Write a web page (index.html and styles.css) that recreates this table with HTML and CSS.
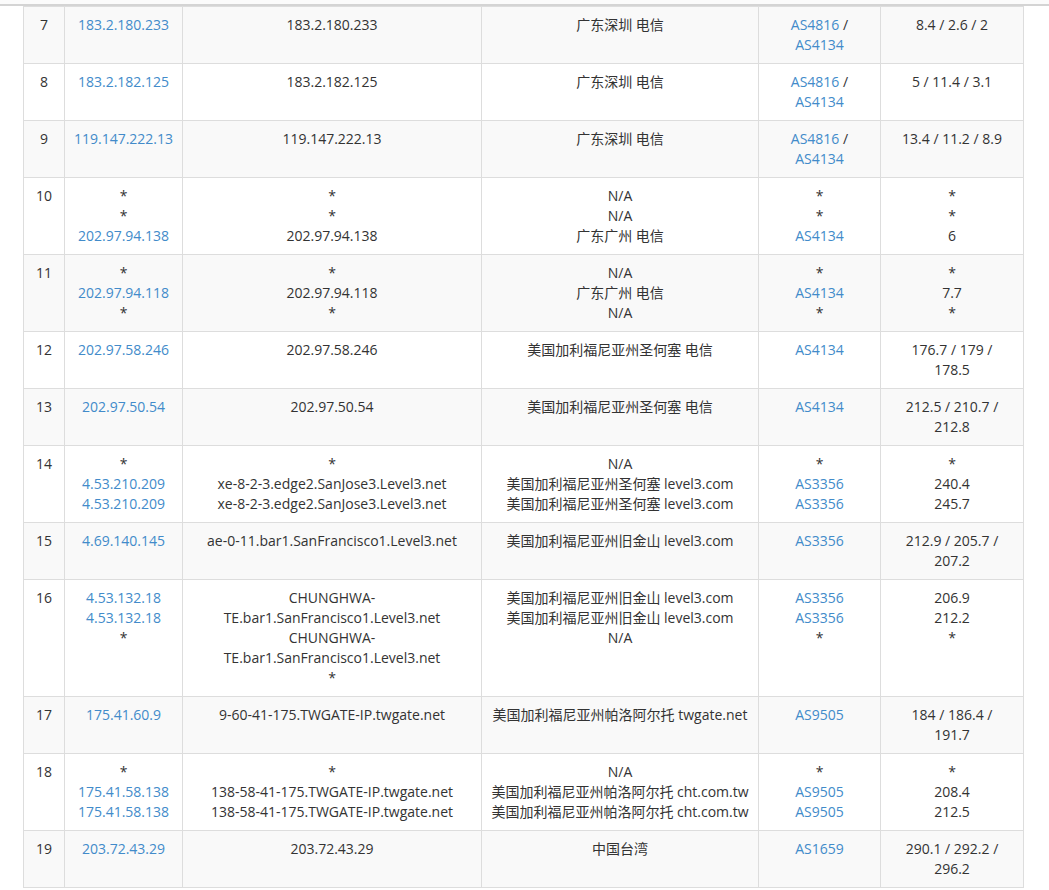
FILE: index.html
```html
<!DOCTYPE html>
<html lang="zh-CN">
<head>
<meta charset="utf-8">
<title>Traceroute</title>
<link rel="stylesheet" href="styles.css">
</head>
<body>
<div class="top"></div>
<div class="rule"></div>
<table class="trace">
  <colgroup>
    <col class="c-hop"><col class="c-ip"><col class="c-host"><col class="c-loc"><col class="c-as"><col class="c-rtt">
  </colgroup>
  <tbody>
    <tr>
      <td>7</td>
      <td><a href="#">183.2.180.233</a></td>
      <td>183.2.180.233</td>
      <td>广东深圳 电信</td>
      <td><a href="#">AS4816</a> / <a href="#">AS4134</a></td>
      <td>8.4 / 2.6 / 2</td>
    </tr>
    <tr>
      <td>8</td>
      <td><a href="#">183.2.182.125</a></td>
      <td>183.2.182.125</td>
      <td>广东深圳 电信</td>
      <td><a href="#">AS4816</a> / <a href="#">AS4134</a></td>
      <td>5 / 11.4 / 3.1</td>
    </tr>
    <tr>
      <td>9</td>
      <td><a href="#">119.147.222.13</a></td>
      <td>119.147.222.13</td>
      <td>广东深圳 电信</td>
      <td><a href="#">AS4816</a> / <a href="#">AS4134</a></td>
      <td>13.4 / 11.2 / 8.9</td>
    </tr>
    <tr>
      <td>10</td>
      <td><div>*</div><div>*</div><div><a href="#">202.97.94.138</a></div></td>
      <td><div>*</div><div>*</div><div>202.97.94.138</div></td>
      <td><div>N/A</div><div>N/A</div><div>广东广州 电信</div></td>
      <td><div>*</div><div>*</div><div><a href="#">AS4134</a></div></td>
      <td><div>*</div><div>*</div><div>6</div></td>
    </tr>
    <tr>
      <td>11</td>
      <td><div>*</div><div><a href="#">202.97.94.118</a></div><div>*</div></td>
      <td><div>*</div><div>202.97.94.118</div><div>*</div></td>
      <td><div>N/A</div><div>广东广州 电信</div><div>N/A</div></td>
      <td><div>*</div><div><a href="#">AS4134</a></div><div>*</div></td>
      <td><div>*</div><div>7.7</div><div>*</div></td>
    </tr>
    <tr>
      <td>12</td>
      <td><a href="#">202.97.58.246</a></td>
      <td>202.97.58.246</td>
      <td>美国加利福尼亚州圣何塞 电信</td>
      <td><a href="#">AS4134</a></td>
      <td>176.7 / 179 /<br>178.5</td>
    </tr>
    <tr>
      <td>13</td>
      <td><a href="#">202.97.50.54</a></td>
      <td>202.97.50.54</td>
      <td>美国加利福尼亚州圣何塞 电信</td>
      <td><a href="#">AS4134</a></td>
      <td>212.5 / 210.7 /<br>212.8</td>
    </tr>
    <tr>
      <td>14</td>
      <td><div>*</div><div><a href="#">4.53.210.209</a></div><div><a href="#">4.53.210.209</a></div></td>
      <td><div>*</div><div>xe-8-2-3.edge2.SanJose3.Level3.net</div><div>xe-8-2-3.edge2.SanJose3.Level3.net</div></td>
      <td><div>N/A</div><div>美国加利福尼亚州圣何塞 level3.com</div><div>美国加利福尼亚州圣何塞 level3.com</div></td>
      <td><div>*</div><div><a href="#">AS3356</a></div><div><a href="#">AS3356</a></div></td>
      <td><div>*</div><div>240.4</div><div>245.7</div></td>
    </tr>
    <tr>
      <td>15</td>
      <td><a href="#">4.69.140.145</a></td>
      <td>ae-0-11.bar1.SanFrancisco1.Level3.net</td>
      <td>美国加利福尼亚州旧金山 level3.com</td>
      <td><a href="#">AS3356</a></td>
      <td>212.9 / 205.7 /<br>207.2</td>
    </tr>
    <tr>
      <td>16</td>
      <td><div><a href="#">4.53.132.18</a></div><div><a href="#">4.53.132.18</a></div><div>*</div></td>
      <td><div>CHUNGHWA-<br>TE.bar1.SanFrancisco1.Level3.net</div><div>CHUNGHWA-<br>TE.bar1.SanFrancisco1.Level3.net</div><div>*</div></td>
      <td><div>美国加利福尼亚州旧金山 level3.com</div><div>美国加利福尼亚州旧金山 level3.com</div><div>N/A</div></td>
      <td><div><a href="#">AS3356</a></div><div><a href="#">AS3356</a></div><div>*</div></td>
      <td><div>206.9</div><div>212.2</div><div>*</div></td>
    </tr>
    <tr>
      <td>17</td>
      <td><a href="#">175.41.60.9</a></td>
      <td>9-60-41-175.TWGATE-IP.twgate.net</td>
      <td>美国加利福尼亚州帕洛阿尔托 twgate.net</td>
      <td><a href="#">AS9505</a></td>
      <td>184 / 186.4 /<br>191.7</td>
    </tr>
    <tr>
      <td>18</td>
      <td><div>*</div><div><a href="#">175.41.58.138</a></div><div><a href="#">175.41.58.138</a></div></td>
      <td><div>*</div><div>138-58-41-175.TWGATE-IP.twgate.net</div><div>138-58-41-175.TWGATE-IP.twgate.net</div></td>
      <td><div>N/A</div><div>美国加利福尼亚州帕洛阿尔托 cht.com.tw</div><div>美国加利福尼亚州帕洛阿尔托 cht.com.tw</div></td>
      <td><div>*</div><div><a href="#">AS9505</a></div><div><a href="#">AS9505</a></div></td>
      <td><div>*</div><div>208.4</div><div>212.5</div></td>
    </tr>
    <tr>
      <td>19</td>
      <td><a href="#">203.72.43.29</a></td>
      <td>203.72.43.29</td>
      <td>中国台湾</td>
      <td><a href="#">AS1659</a></td>
      <td>290.1 / 292.2 /<br>296.2</td>
    </tr>
  </tbody>
</table>
</body>
</html>
```
FILE: styles.css
```css
html, body {
  margin: 0;
  padding: 0;
  background: #ffffff;
}

body {
  font-family: "Open Sans", "Noto Sans CJK SC", sans-serif;
  font-size: 14px;
  line-height: 20px;
  color: #333333;
}

.top {
  height: 4px;
  background: #fbfbfb;
}

.rule {
  height: 2px;
  background: #d4d4d4;
}

.trace {
  margin-left: 23px;
  border-collapse: collapse;
  table-layout: fixed;
  width: 1000px;
}

.c-hop { width: 41px; }
.c-ip { width: 118px; }
.c-host { width: 299px; }
.c-loc { width: 277px; }
.c-as { width: 122px; }
.c-rtt { width: 143px; }

.trace td {
  border: 1px solid #dddddd;
  padding: 8px;
  text-align: center;
  vertical-align: top;
}

.trace tbody tr:nth-child(odd) td {
  background: #f9f9f9;
}

.trace a {
  color: #428bca;
  text-decoration: none;
}
```
